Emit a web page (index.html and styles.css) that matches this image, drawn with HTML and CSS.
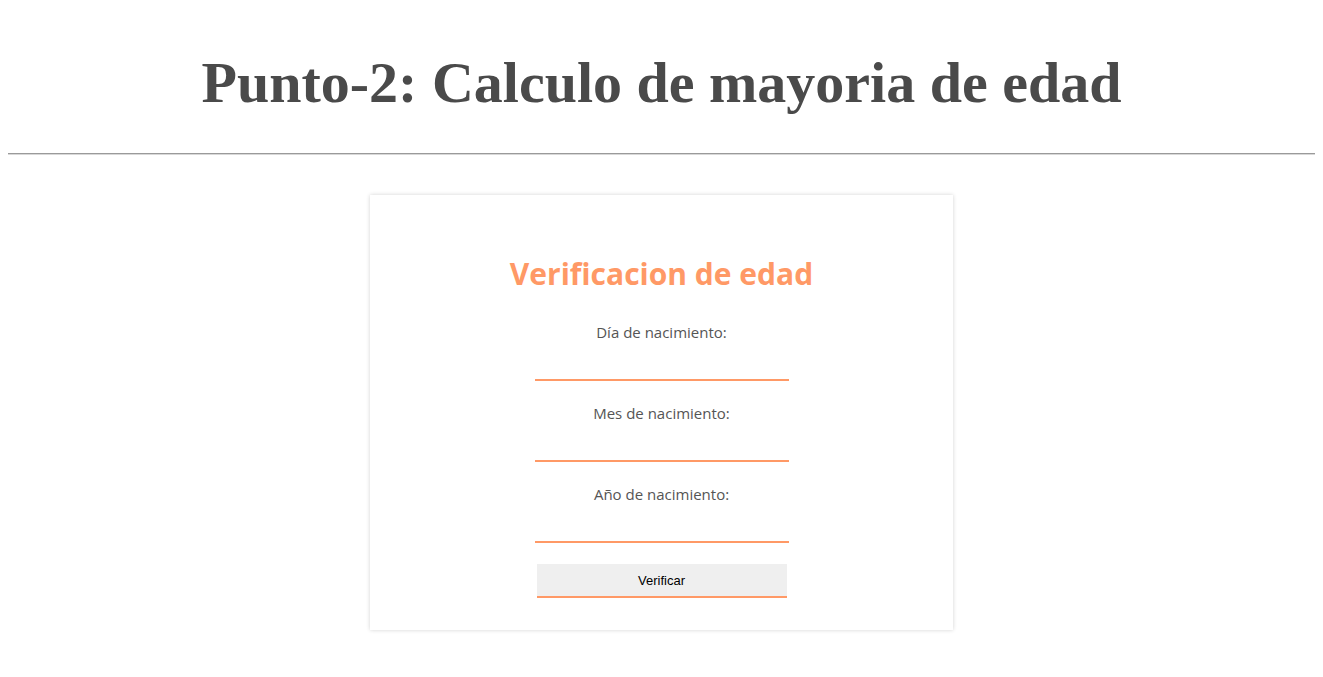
FILE: index.html
```html
<!DOCTYPE html>
<html lang="es">
<head>
<meta charset="utf-8">
<title>Punto-2</title>
<link rel="stylesheet" href="styles.css">
</head>
<body>
<h1 class="title">Punto-2: Calculo de mayoria de edad</h1>
<hr class="rule">
<main class="card">
  <h2 class="card-title">Verificacion de edad</h2>
  <form class="form">
    <label class="label" for="dia">Día de nacimiento:</label>
    <input class="field" id="dia" type="text">
    <label class="label" for="mes">Mes de nacimiento:</label>
    <input class="field" id="mes" type="text">
    <label class="label" for="anio">Año de nacimiento:</label>
    <input class="field" id="anio" type="text">
    <button class="btn" type="button">Verificar</button>
  </form>
</main>
</body>
</html>
```
FILE: styles.css
```css
body {
  margin: 8px;
  background: #fff;
}
.title {
  font-family: "Liberation Serif", "Times New Roman", serif;
  font-weight: bold;
  font-size: 58px;
  line-height: 69px;
  color: #4a4a4a;
  text-align: center;
  margin: 40px 0 36px;
}
.rule {
  margin: 0;
  border: none;
  border-top: 1px solid #9a9a9a;
  border-bottom: 1px solid #d8d8d8;
  height: 0;
}
.card {
  width: 583px;
  height: 435px;
  box-sizing: border-box;
  margin: 40px auto 30px;
  padding-top: 59px;
  background: #fff;
  box-shadow: 0 0 4px rgba(0, 0, 0, 0.18);
  display: flex;
  flex-direction: column;
  align-items: center;
}
.card-title {
  font-family: "Open Sans", "Noto Sans", sans-serif;
  font-weight: 700;
  font-size: 30px;
  line-height: 40px;
  color: #ff9966;
  margin: 0 0 27px;
}
.form {
  display: flex;
  flex-direction: column;
  align-items: center;
}
.label {
  font-family: "Open Sans", "Noto Sans", sans-serif;
  font-size: 15px;
  line-height: 22px;
  color: #555;
  margin-bottom: 6px;
}
.field {
  width: 254px;
  height: 32px;
  box-sizing: border-box;
  border: none;
  border-bottom: 2px solid #ff9966;
  background: transparent;
  margin: 0 0 21px;
  padding: 0;
  outline: none;
}
.btn {
  width: 250px;
  height: 34px;
  box-sizing: border-box;
  border: none;
  border-bottom: 2px solid #ff9966;
  background: #efefef;
  font-family: "Liberation Sans", Arial, sans-serif;
  font-size: 13px;
  color: #000;
  padding: 0;
}
```
